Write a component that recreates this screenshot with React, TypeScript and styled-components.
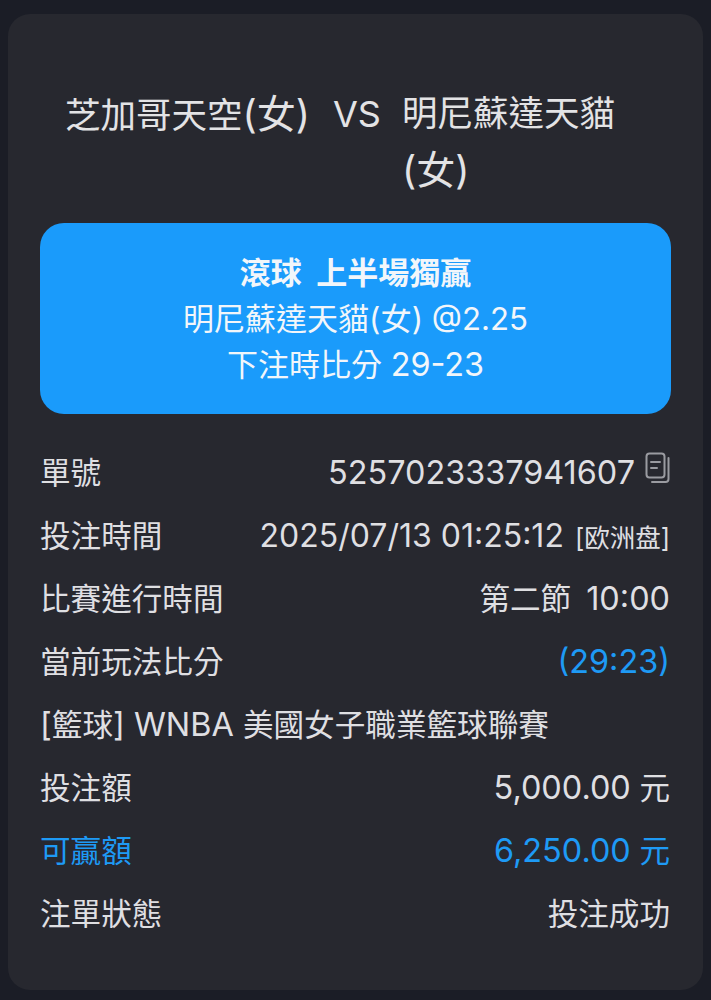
import React from "react";
import styled, { createGlobalStyle } from "styled-components";

const Global = createGlobalStyle`
  html, body { margin: 0; padding: 0; background: #1b1d26; }
  body { font-family: Inter, "Noto Sans CJK TC", sans-serif; }
`;
const Page = styled.div`
  width: 711px;
  height: 1000px;
  box-sizing: border-box;
  padding: 14px 8px 10px;
  background: #1b1d26;
  overflow: hidden;
`;
const Card = styled.div`
  height: 976px;
  box-sizing: border-box;
  background: #27282f;
  border-radius: 22px;
  padding: 72px 32px 0;
`;
const Match = styled.div`
  display: flex;
  align-items: flex-start;
  gap: 24px;
  height: 137px;
  padding-left: 25px;
  font-size: 35.5px;
  line-height: 56px;
  color: #e3e3e5;
`;
const Team = styled.div<{ $w: number; $single?: boolean }>`
  width: ${(p) => p.$w}px;
  flex: none;
  white-space: ${(p) => (p.$single ? "nowrap" : "normal")};
`;
const Paren = styled.span`
  font-size: 39px;
`;
const Versus = styled.div`
  flex: none;
  font-size: 36px;
  margin-right: -3px;
`;
const Banner = styled.div`
  height: 191px;
  box-sizing: border-box;
  padding-top: 27px;
  background: #1a9bfb;
  border-radius: 24px;
  color: #f2f6fa;
  text-align: center;
  font-size: 31px;
  line-height: 46px;
`;
const BannerTitle = styled.div`
  font-weight: 700;
`;
const Odds = styled.span`
  font-size: 31.2px;
`;
const Rows = styled.div`
  display: flex;
  flex-direction: column;
  padding: 25px 1px 0 0;
`;
const Row = styled.div<{ $accent?: boolean }>`
  display: flex;
  justify-content: space-between;
  align-items: center;
  height: 63px;
  font-size: 30.6px;
  color: ${(p) => (p.$accent ? "#1e9af5" : "#dfdfe2")};
`;
const Value = styled.div<{ $accent?: boolean; $drop?: boolean }>`
  display: flex;
  align-items: baseline;
  padding-top: ${(p) => (p.$drop ? 4 : 0)}px;
  color: ${(p) => (p.$accent ? "#1e9af5" : "inherit")};
`;
const Latin = styled.span`
  font-size: 32.4px;
`;
const DateText = styled.span`
  font-size: 32px;
`;
const Period = styled.span`
  margin-right: 15px;
`;
const Tag = styled.span`
  font-size: 25.5px;
  margin-left: 11px;
`;
const CopyIcon = styled.svg`
  width: 25px;
  height: 33px;
  margin-left: 10px;
  align-self: center;
  margin-top: -8px;
  color: #9a9ba1;
`;

export default function App() {
  return (
    <Page>
      <Global />
      <Card>
        <Match>
          <Team $w={244} $single>
            芝加哥天空<Paren>(女)</Paren>
          </Team>
          <Versus>VS</Versus>
          <Team $w={220}>
            明尼蘇達天貓<Paren>(女)</Paren>
          </Team>
        </Match>
        <Banner>
          <BannerTitle>滾球&nbsp;&nbsp;上半場獨贏</BannerTitle>
          <div>
            明尼蘇達天貓<Odds>(女) @2.25</Odds>
          </div>
          <div>
            下注時比分 <Latin>29-23</Latin>
          </div>
        </Banner>
        <Rows>
          <Row>
            <span>單號</span>
            <Value $drop>
              <Latin>5257023337941607</Latin>
              <CopyIcon viewBox="0 0 25 33" fill="none" stroke="currentColor" strokeWidth="2" strokeLinecap="round">
                <rect x="1.5" y="1.5" width="18" height="24" rx="3" />
                <path d="M6 10h9M6 16h6" />
                <path d="M23.5 6v21a3 3 0 0 1-3 3H7" />
              </CopyIcon>
            </Value>
          </Row>
          <Row>
            <span>投注時間</span>
            <Value $drop>
              <DateText>2025/07/13 01:25:12</DateText>
              <Tag>[欧洲盘]</Tag>
            </Value>
          </Row>
          <Row>
            <span>比賽進行時間</span>
            <Value>
              <Period>第二節</Period>
              <Latin>10:00</Latin>
            </Value>
          </Row>
          <Row>
            <span>當前玩法比分</span>
            <Value $accent $drop>
              <Latin>(29:23)</Latin>
            </Value>
          </Row>
          <Row>
            <span>
              <Latin>[</Latin>籃球<Latin>] WNBA </Latin>美國女子職業籃球聯賽
            </span>
          </Row>
          <Row>
            <span>投注額</span>
            <Value>
              <Latin>5,000.00</Latin>&nbsp;元
            </Value>
          </Row>
          <Row $accent>
            <span>可贏額</span>
            <Value>
              <Latin>6,250.00</Latin>&nbsp;元
            </Value>
          </Row>
          <Row>
            <span>注單狀態</span>
            <Value>投注成功</Value>
          </Row>
        </Rows>
      </Card>
    </Page>
  );
}
